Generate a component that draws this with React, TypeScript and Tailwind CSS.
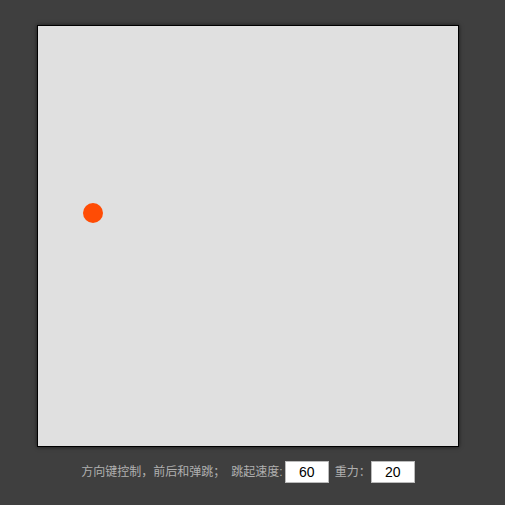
export default function App() {
  return (
    <div className="w-[505px] h-[505px] bg-[#3f3f3f] overflow-hidden" style={{ fontFamily: '"Liberation Sans", "Noto Sans CJK SC", sans-serif' }}>
      <div className="ml-[37px] pt-[25px] w-[422px]">
        <div className="relative w-[422px] h-[422px] border border-black bg-[#e0e0e0] shadow-[0_0_4px_rgba(0,0,0,0.6)]">
          <div className="absolute left-[45px] top-[177px] w-[20px] h-[20px] rounded-full bg-[#ff4c05]" />
        </div>
        <div className="mt-[14px] flex items-center justify-center text-[12px] text-[#b0b0b0] leading-none">
          <span>方向键控制，前后和弹跳；</span>
          <span className="ml-[6px]">跳起速度:</span>
          <input readOnly value="60" className="ml-[2px] w-[44px] h-[22px] bg-white text-black text-center text-[14px] border border-[#bbb] outline-none" />
          <span className="ml-[6px]">重力：</span>
          <input readOnly value="20" className="ml-[0px] w-[44px] h-[22px] bg-white text-black text-center text-[14px] border border-[#bbb] outline-none" />
        </div>
      </div>
    </div>
  );
}
